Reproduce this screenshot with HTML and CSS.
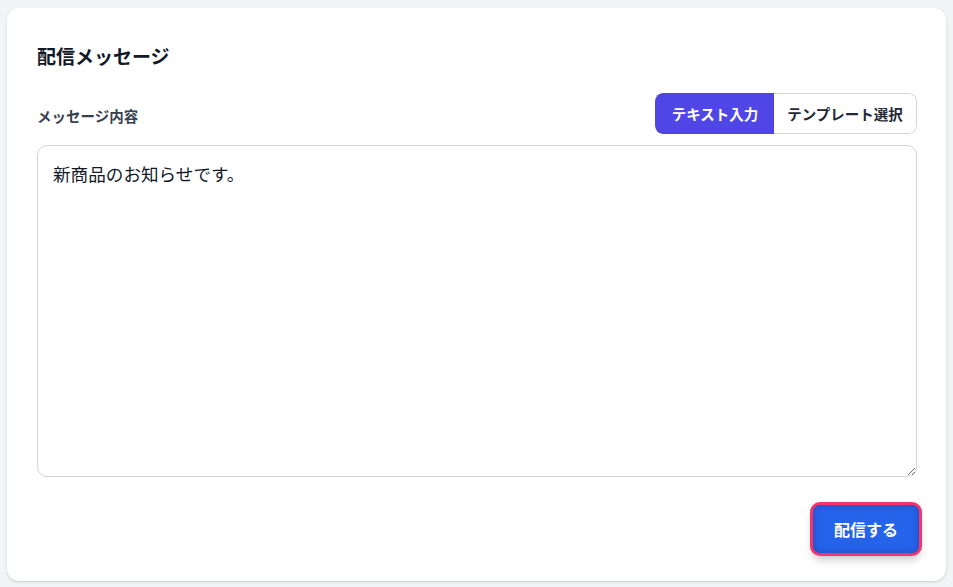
FILE: index.html
```html
<!DOCTYPE html>
<html lang="ja">
<head>
<meta charset="utf-8">
<title>配信メッセージ</title>
<link rel="stylesheet" href="styles.css">
</head>
<body>
<div class="card">
  <h2 class="title">配信メッセージ</h2>
  <div class="row">
    <label class="label" for="msg">メッセージ内容</label>
    <div class="seg">
      <button class="seg-btn active">テキスト入力</button>
      <button class="seg-btn">テンプレート選択</button>
    </div>
  </div>
  <textarea id="msg" class="msg">新商品のお知らせです。</textarea>
  <div class="actions">
    <button class="send">配信する</button>
  </div>
</div>
</body>
</html>
```
FILE: styles.css
```css
* { box-sizing: border-box; }
html, body { margin: 0; }
body {
  background: #f3f4f6;
  padding: 8px 7px 6px 7px;
  font-family: "Noto Sans CJK JP", "Noto Sans", sans-serif;
  color: #111827;
}
.card {
  background: #fff;
  border-radius: 12px;
  box-shadow: 0 1px 3px rgba(0,0,0,0.12), 0 1px 2px rgba(0,0,0,0.06);
  padding: 32px 29px 26px 30px;
  height: 573px;
  display: flex;
  flex-direction: column;
}
.title {
  margin: 0;
  font-size: 19px;
  line-height: 32px;
  font-weight: 700;
  color: #111827;
}
.row {
  margin-top: 21px;
  display: flex;
  align-items: center;
  justify-content: space-between;
}
.label {
  font-size: 14.5px;
  font-weight: 600;
  color: #374151;
  padding-top: 3px;
}
.seg {
  display: flex;
  height: 41px;
  border-radius: 8px;
  overflow: hidden;
}
.seg-btn {
  font-family: inherit;
  font-size: 14.5px;
  font-weight: 700;
  border: 1px solid #d1d5db;
  background: #fff;
  color: #1f2937;
  padding: 0;
  width: 143px;
  cursor: pointer;
}
.seg-btn:first-child { border-radius: 8px 0 0 8px; border-right: none; }
.seg-btn:last-child { border-radius: 0 8px 8px 0; border-left: none; }
.seg-btn.active {
  background: #4f46e5;
  border-color: #4f46e5;
  color: #fff;
  width: 119px;
}
.msg {
  margin-top: 11px;
  display: block;
  width: 100%;
  height: 332px;
  border: 1px solid #d1d5db;
  border-radius: 10px;
  padding: 16px 15px;
  font-family: inherit;
  font-size: 17.6px;
  line-height: 24px;
  color: #111827;
  resize: vertical;
  outline: none;
}
.actions {
  margin-top: 28px;
  display: flex;
  justify-content: flex-end;
}
.send {
  font-family: inherit;
  font-size: 16px;
  font-weight: 700;
  color: #fff;
  background: #2563eb;
  border: none;
  border-radius: 7px;
  width: 106px;
  height: 48px;
  margin-right: -2px;
  box-shadow: 0 0 0 3px #f7336e, inset 0 0 6px rgba(30,58,138,0.6), 0 6px 10px rgba(0,0,0,0.25);
  cursor: pointer;
}
```
